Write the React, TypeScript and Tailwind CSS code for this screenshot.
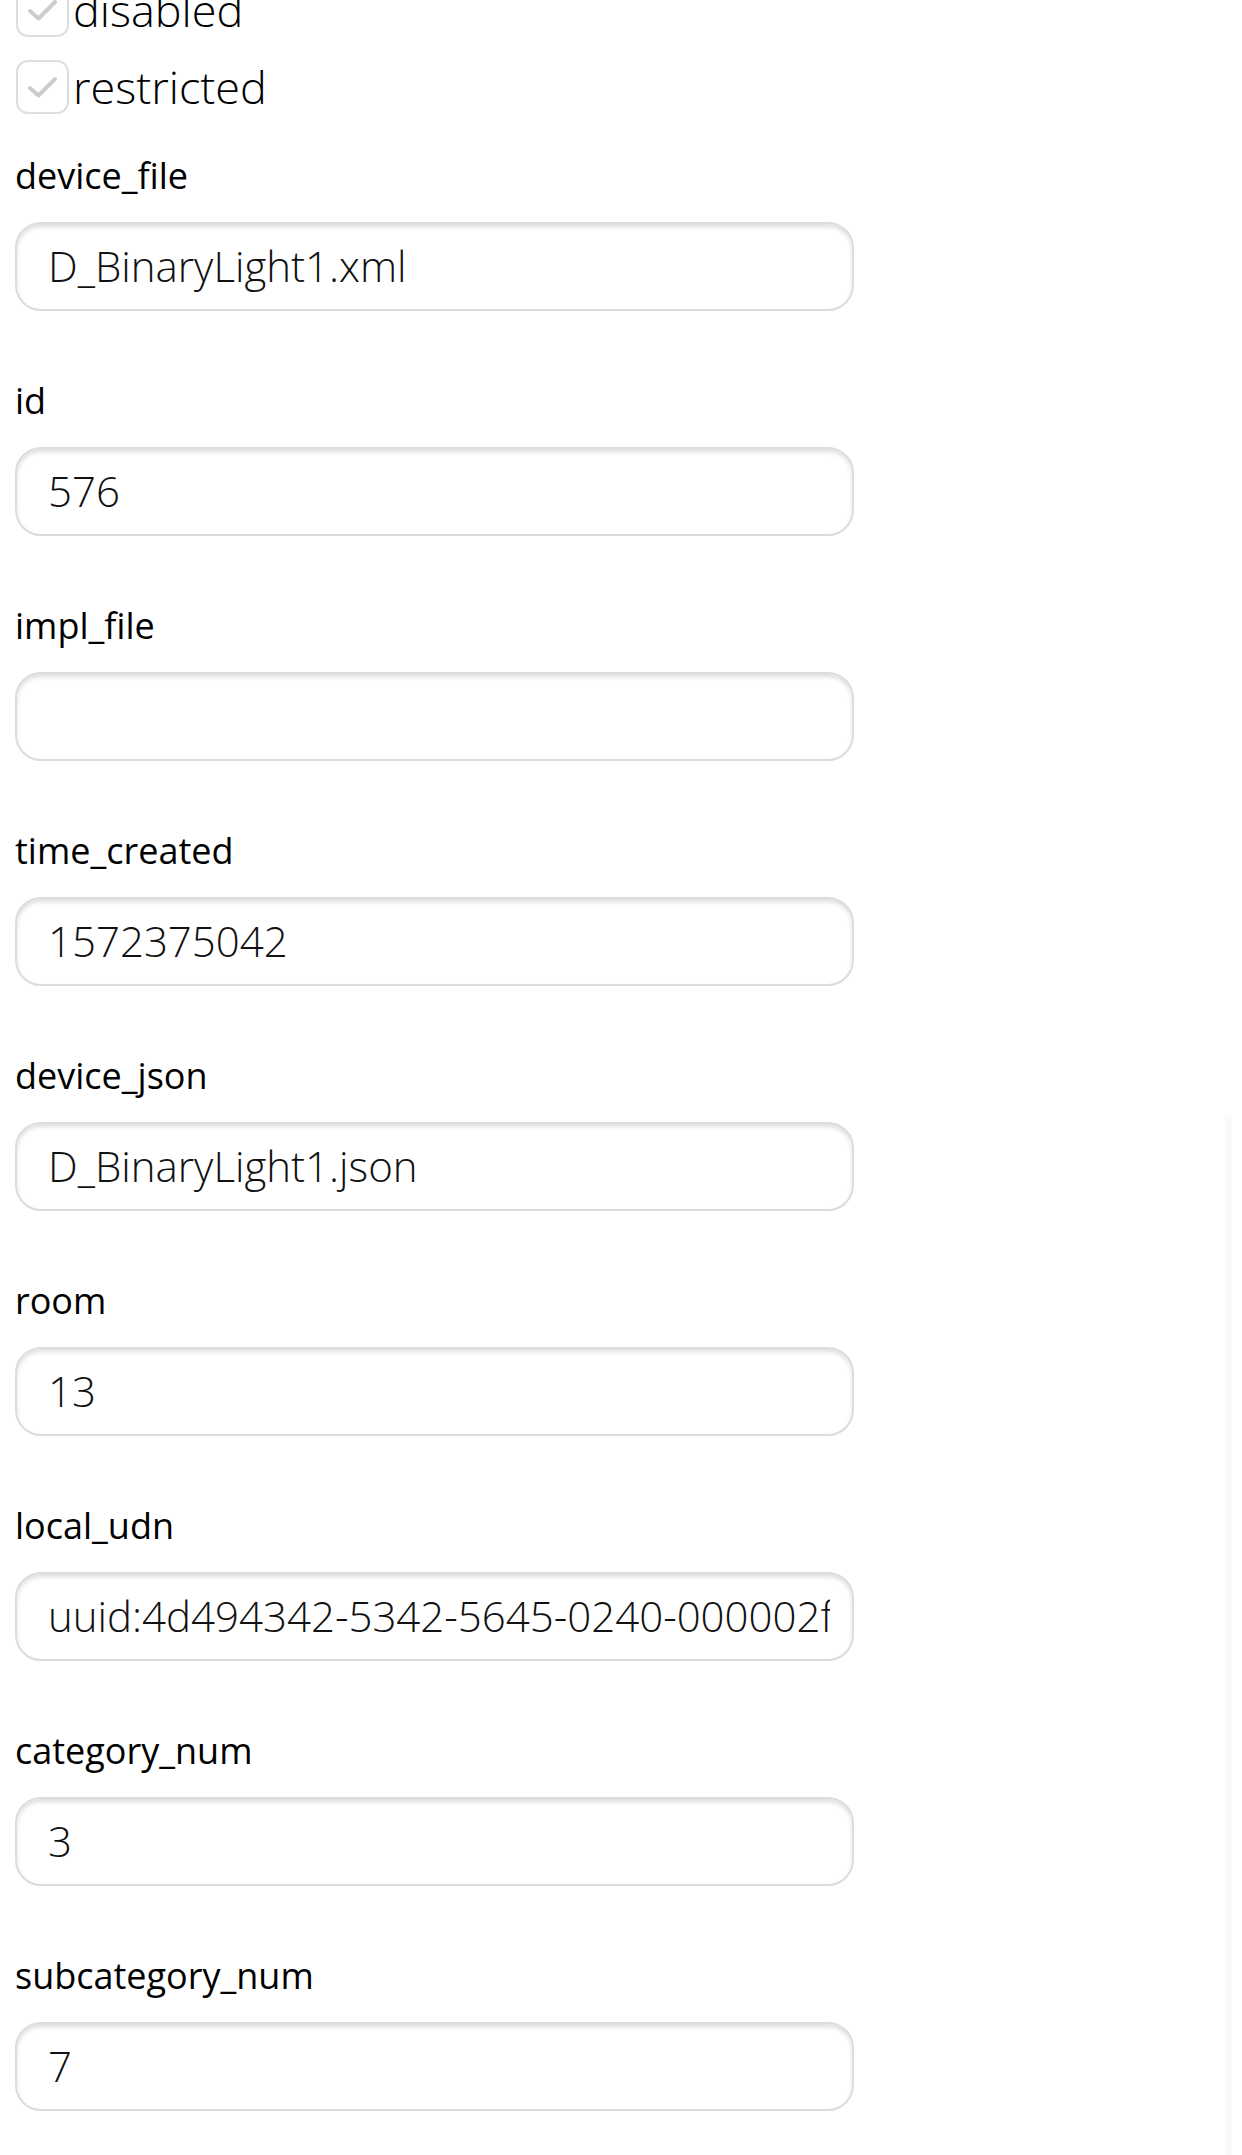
import React from "react";

const fields: { label: string; value: string }[] = [
  { label: "device_file", value: "D_BinaryLight1.xml" },
  { label: "id", value: "576" },
  { label: "impl_file", value: "" },
  { label: "time_created", value: "1572375042" },
  { label: "device_json", value: "D_BinaryLight1.json" },
  { label: "room", value: "13" },
  { label: "local_udn", value: "uuid:4d494342-5342-5645-0240-000002f00000" },
  { label: "category_num", value: "3" },
  { label: "subcategory_num", value: "7" },
];

function Check({ label }: { label: string }) {
  return (
    <div className="flex h-[54px] items-center">
      <div className="ml-[1px] flex h-[54px] w-[53px] items-center justify-center rounded-[12px] border-2 border-[#dedede] bg-white">
        <svg width="36" height="30" viewBox="0 0 36 30" fill="none">
          <path d="M5 16 L13.5 23.5 L30 7" stroke="#cccccc" strokeWidth="4" strokeLinecap="round" strokeLinejoin="round" />
        </svg>
      </div>
      <span className="ml-[4px] text-[45px] font-light leading-[54px] text-black">{label}</span>
    </div>
  );
}

export default function App() {
  return (
    <div
      className="relative min-h-[2155px] w-full overflow-hidden bg-white"
      style={{ fontFamily: '"Open Sans", "Noto Sans", sans-serif' }}
    >
      <div className="absolute right-[10px] top-[1115px] h-[1040px] w-[7px] bg-[#fafafa]" />
      <div className="-mt-[17px] px-[15px]">
        <div className="flex flex-col gap-[23px]">
          <Check label="disabled" />
          <Check label="restricted" />
        </div>
        <div className="mt-[34px] flex flex-col">
          {fields.map((f) => (
            <div key={f.label} className="flex h-[225px] flex-col">
              <div className="pt-[5px] text-[36px] leading-[46px] text-black">{f.label}</div>
              <input
                readOnly
                value={f.value}
                className="mt-[23px] h-[89px] w-[839px] rounded-[26px] border-2 border-[#dcdcdc] bg-white pb-[3px] pl-[31px] pr-[22px] text-[42px] font-light text-[#111] shadow-[inset_0_3px_4px_rgba(0,0,0,0.13)] outline-none"
              />
            </div>
          ))}
        </div>
      </div>
    </div>
  );
}
